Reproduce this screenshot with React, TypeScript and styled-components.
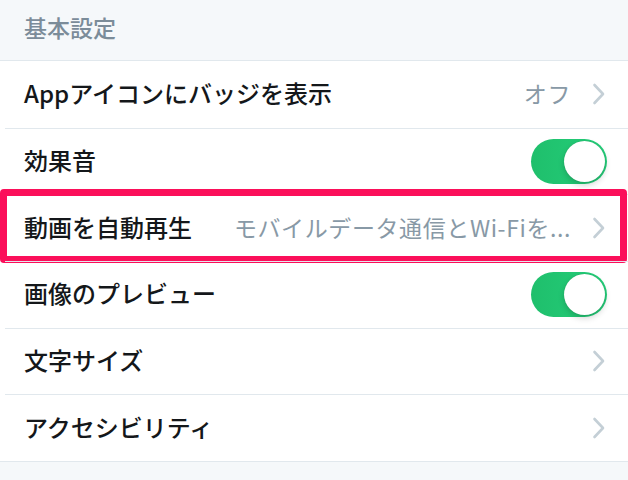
import React from 'react';
import styled, { createGlobalStyle } from 'styled-components';

const GlobalStyle = createGlobalStyle`
  html, body {
    margin: 0;
    padding: 0;
    background: #f5f8fa;
  }
  body {
    font-family: "Noto Sans CJK JP", "Noto Sans", sans-serif;
    -webkit-font-smoothing: antialiased;
  }
`;

const Page = styled.div`
  width: 628px;
  height: 480px;
  background: #f5f8fa;
  overflow: hidden;
`;

const SectionHeader = styled.div`
  height: 60px;
  display: flex;
  align-items: center;
  padding: 0 0 6px 24px;
  box-sizing: border-box;
  font-size: 23px;
  line-height: 1;
  font-weight: 500;
  color: #7b8c99;
`;

const List = styled.div`
  background: #ffffff;
  border-top: 1px solid #e1e8ed;
  border-bottom: 1px solid #e1e8ed;
`;

const Row = styled.div`
  position: relative;
  height: 66.67px;
  box-sizing: border-box;
  display: flex;
  align-items: center;
  margin-left: 5px;
  padding: 0 22px 0 19px;
  & + & {
    border-top: 1px solid #e1e8ed;
  }
`;

const Label = styled.span`
  font-size: 24px;
  line-height: 1;
  font-weight: 500;
  color: #14171a;
  white-space: nowrap;
  flex-shrink: 0;
  margin-top: -3px;
`;

const Value = styled.span`
  flex: 1;
  margin: -3px 21px 0 30px;
  text-align: right;
  font-size: 23px;
  letter-spacing: 0.6px;
  line-height: 1.4;
  font-weight: 400;
  color: #8899a6;
  white-space: nowrap;
`;

const Spacer = styled.span`
  flex: 1;
`;

const Chevron = () => (
  <svg width="14" height="22" viewBox="0 0 14 22" style={{ flexShrink: 0 }}>
    <path d="M2.5 2 L11 11 L2.5 20" fill="none" stroke="#c4cfd6" strokeWidth="2.6" strokeLinecap="round" strokeLinejoin="round" />
  </svg>
);

const Track = styled.div`
  width: 76px;
  height: 45px;
  border-radius: 23px;
  background: linear-gradient(90deg, #1fbf6c, #25cf7a);
  display: flex;
  align-items: center;
  justify-content: flex-end;
  padding: 0 2px;
  box-sizing: border-box;
  margin-right: -1px;
`;

const Knob = styled.div`
  width: 41px;
  height: 41px;
  border-radius: 50%;
  background: #ffffff;
  box-shadow: 0 3px 6px rgba(0, 0, 0, 0.18), 0 0 1px rgba(0, 0, 0, 0.2);
`;

const Highlight = styled.div`
  position: absolute;
  left: -5px;
  right: 1px;
  top: -6px;
  bottom: -2px;
  border: 7px solid #fb0f5a;
  border-radius: 4px;
  pointer-events: none;
`;

const Toggle = () => (
  <Track>
    <Knob />
  </Track>
);

type Item = {
  label: string;
  value?: string;
  toggle?: boolean;
  highlight?: boolean;
};

const items: Item[] = [
  { label: 'Appアイコンにバッジを表示', value: 'オフ' },
  { label: '効果音', toggle: true },
  { label: '動画を自動再生', value: 'モバイルデータ通信とWi-Fiを...', highlight: true },
  { label: '画像のプレビュー', toggle: true },
  { label: '文字サイズ' },
  { label: 'アクセシビリティ' },
];

export default function App() {
  return (
    <Page>
      <GlobalStyle />
      <SectionHeader>基本設定</SectionHeader>
      <List>
        {items.map((item) => (
          <Row key={item.label}>
            <Label>{item.label}</Label>
            {item.toggle ? (
              <>
                <Spacer />
                <Toggle />
              </>
            ) : (
              <>
                {item.value ? <Value>{item.value}</Value> : <Spacer />}
                <Chevron />
              </>
            )}
            {item.highlight && <Highlight />}
          </Row>
        ))}
      </List>
    </Page>
  );
}
